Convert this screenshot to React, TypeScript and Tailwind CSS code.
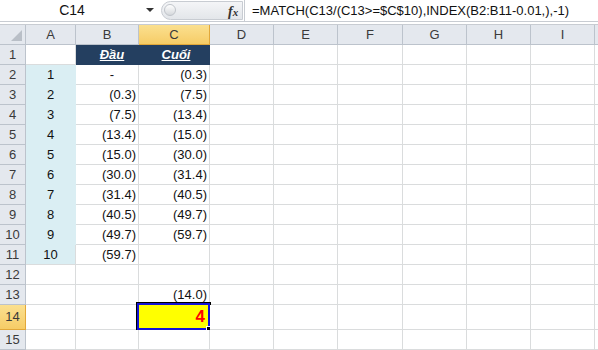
import React from "react";

const colW = [26, 50, 63, 71, 64, 64, 65, 64, 64, 64, 60];
const colNames = ["", "A", "B", "C", "D", "E", "F", "G", "H", "I", ""];
const rowH = [20, 20, 20, 20, 20, 20, 20, 20, 20, 20, 20, 20, 20, 25, 20];

const B = ["", "-", "(0.3)", "(7.5)", "(13.4)", "(15.0)", "(30.0)", "(31.4)", "(40.5)", "(49.7)", "(59.7)", "", "", "", ""];
const C = ["", "(0.3)", "(7.5)", "(13.4)", "(15.0)", "(30.0)", "(31.4)", "(40.5)", "(49.7)", "(59.7)", "", "", "(14.0)", "", ""];

function Cell({ r, c }: { r: number; c: number }) {
  const row = r + 1;
  const w = colW[c];
  const h = rowH[r];
  const style = { width: w, height: h };
  if (c === 0) {
    const sel = row === 14;
    return (
      <div
        style={style}
        className={
          sel
            ? "shrink-0 flex items-center justify-center border-r border-b border-[#e2a83a] bg-gradient-to-b from-[#fbe08f] to-[#f6cc66] text-[13px] text-[#3a3a3a]"
            : "shrink-0 flex items-center justify-center border-r border-b border-[#bcc3cc] bg-[#e4e8ee] text-[13px] text-[#3a3a3a]"
        }
      >
        {row}
      </div>
    );
  }
  let content: React.ReactNode = null;
  let cls = "shrink-0 flex items-center border-r border-b border-[#dadcdd] bg-white text-[13px] text-[#111] relative";
  if (c === 1 && row >= 2 && row <= 11) {
    cls = "shrink-0 flex items-center justify-center border-r border-b border-[#daeef3] bg-[#daeef3] text-[13px] text-[#111]";
    if (row === 11) cls = "shrink-0 flex items-center justify-center border-r border-b border-[#dadcdd] bg-[#daeef3] text-[13px] text-[#111]";
    content = row - 1;
  } else if ((c === 2 || c === 3) && row === 1) {
    cls = "shrink-0 flex items-center justify-center border-r border-b border-[#243f60] bg-[#243f60] text-[13px] text-white font-bold italic underline";
    content = c === 2 ? <span className="pl-[10px]">Đầu</span> : <span className="pl-[4px]">Cuối</span>;
  } else if (c === 2) {
    cls += " justify-end pr-[2px]";
    content = B[r] === "-" ? <span className="pr-[22px]">-</span> : B[r];
  } else if (c === 3 && row === 14) {
    return (
      <div style={style} className="shrink-0 relative border-r border-b border-[#dadcdd] bg-white">
        <div className="absolute left-[-2px] top-[-2px] right-[-1px] bottom-[-1px] border-[2px] border-[#1414d8] outline outline-1 outline-black bg-[#ffff00] flex items-center justify-end pr-[3px] text-[17px] font-bold text-[#ff0000]">
          4
        </div>
        <div className="absolute right-[-3px] bottom-[-3px] w-[6px] h-[6px] bg-black border border-white"></div>
      </div>
    );
  } else if (c === 3) {
    cls += " justify-end pr-[2px]";
    content = C[r];
  }
  return (
    <div style={style} className={cls}>
      {content}
    </div>
  );
}

export default function App() {
  return (
    <div
      className="w-[598px] h-[350px] overflow-hidden bg-white relative"
      style={{ fontFamily: '"Liberation Sans", Arial, sans-serif' }}
    >
      {/* formula bar */}
      <div className="h-[21px] flex items-stretch bg-white">
        <div className="w-[142px] flex items-center justify-center pl-[2px] text-[14px] text-[#111]">C14</div>
        <div className="w-[16px] flex items-center justify-center">
          <svg width="8" height="5" viewBox="0 0 8 5">
            <path d="M0 0 L8 0 L4 4 Z" fill="#333" />
          </svg>
        </div>
        <div className="w-[86px] flex items-center relative">
          <div className="absolute left-[3px] top-[1px] w-[82px] h-[19px] rounded-l-full bg-gradient-to-b from-[#f4f5f7] to-[#e3e6ea] border border-[#c8ccd2]"></div>
          <div className="absolute left-[6px] top-[4px] w-[12px] h-[12px] rounded-full bg-gradient-to-b from-[#ffffff] to-[#d5d8dc] border border-[#c0c4ca]"></div>
          <span
            className="absolute left-[70px] top-[1px] text-[14px] italic font-bold text-[#333]"
            style={{ fontFamily: '"Liberation Serif", serif' }}
          >
            f<span className="text-[11px]">x</span>
          </span>
        </div>
        <div className="flex-1 border-l border-[#c8ccd2] flex items-center pl-[7px] text-[13px] text-[#111] whitespace-nowrap">
          =MATCH(C13/(C13&gt;=$C$10),INDEX(B2:B11-0.01,),-1)
        </div>
      </div>
      <div className="h-[4px] border-t border-b border-[#c8ccd2] bg-white"></div>
      {/* header row */}
      <div className="flex">
        {colW.map((w, c) => {
          if (c === 0)
            return (
              <div
                key={c}
                style={{ width: w, height: 20 }}
                className="shrink-0 relative border-r border-b border-[#bcc3cc] bg-[#e4e8ee]"
              >
                <svg className="absolute right-[3px] bottom-[3px]" width="11" height="11" viewBox="0 0 11 11">
                  <path d="M11 0 L11 11 L0 11 Z" fill="#b9bfc7" />
                </svg>
              </div>
            );
          const sel = c === 3;
          return (
            <div
              key={c}
              style={{ width: w, height: 20 }}
              className={
                sel
                  ? "shrink-0 flex items-center justify-center border-r border-b border-[#e2a83a] bg-gradient-to-b from-[#fbe08f] to-[#f6cc66] text-[13px] text-[#3a3a3a]"
                  : "shrink-0 flex items-center justify-center border-r border-b border-[#bcc3cc] bg-[#e4e8ee] text-[13px] text-[#3a3a3a]"
              }
            >
              {colNames[c]}
            </div>
          );
        })}
      </div>
      {rowH.map((h, r) => (
        <div key={r} className="flex">
          {colW.map((_, c) => (
            <Cell key={c} r={r} c={c} />
          ))}
        </div>
      ))}
    </div>
  );
}
